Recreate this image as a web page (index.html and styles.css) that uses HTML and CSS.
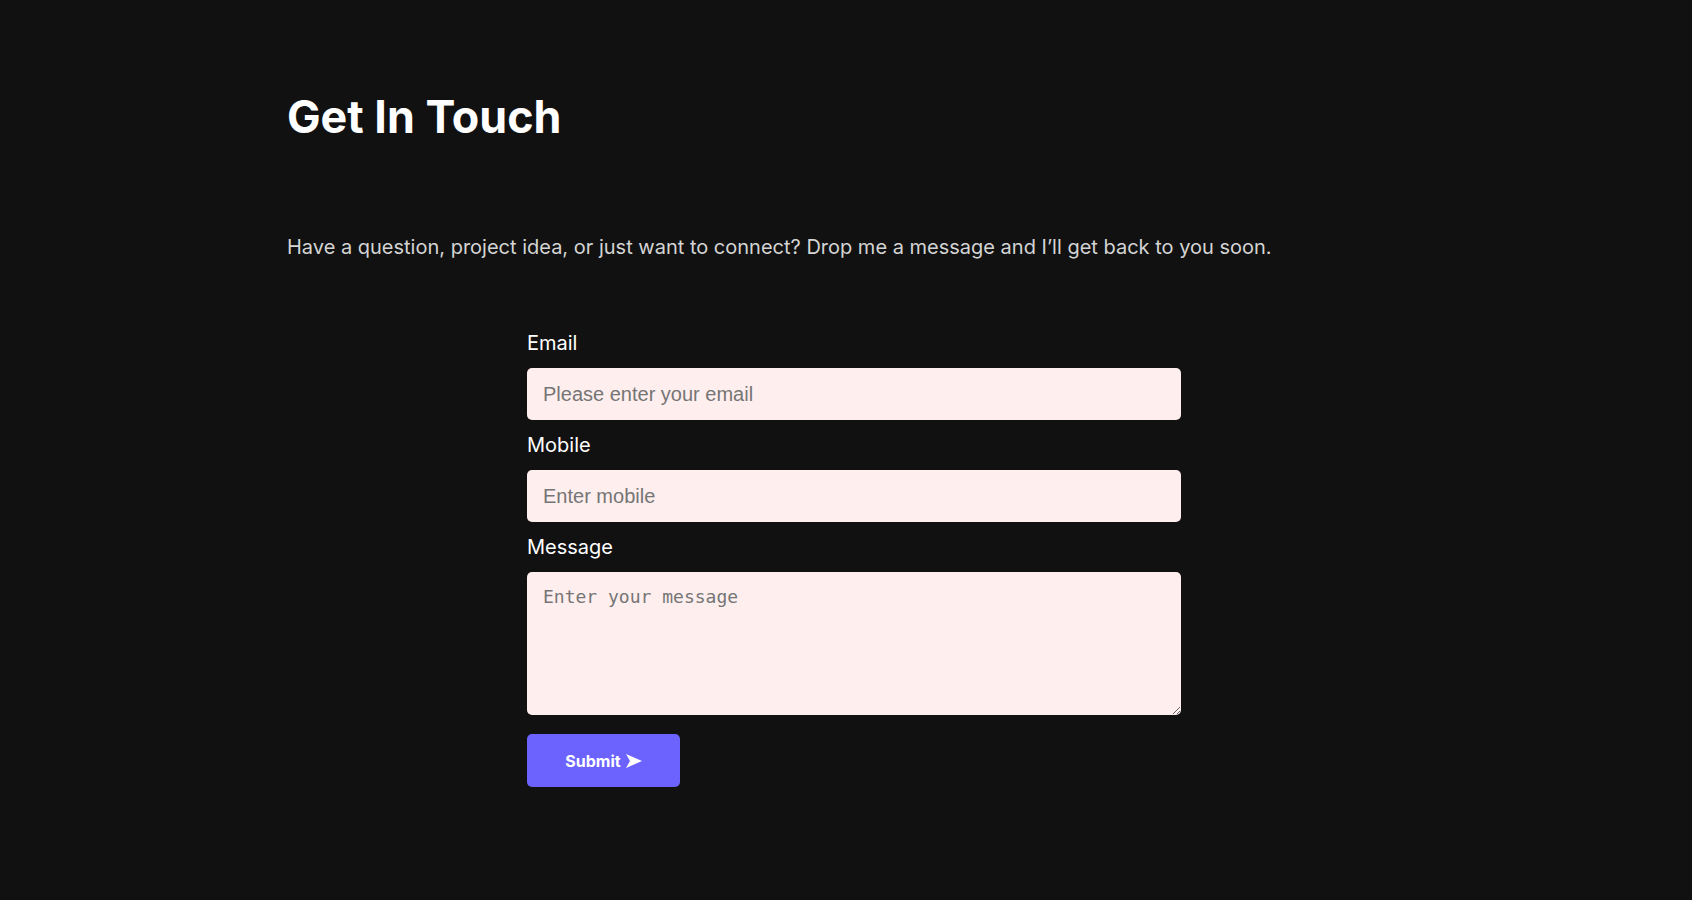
FILE: index.html
```html
<!DOCTYPE html>
<html lang="en">
<head>
<meta charset="utf-8">
<title>Get In Touch</title>
<link rel="stylesheet" href="styles.css">
</head>
<body>
<section class="contact">
  <h1 class="contact-title">Get In Touch</h1>
  <p class="contact-intro">Have a question, project idea, or just want to connect? Drop me a message and I’ll get back to you soon.</p>
  <form class="contact-form">
    <label class="field-label" for="email">Email</label>
    <input class="field-input" id="email" type="email" placeholder="Please enter your email">
    <label class="field-label" for="mobile">Mobile</label>
    <input class="field-input" id="mobile" type="text" placeholder="Enter mobile">
    <label class="field-label" for="message">Message</label>
    <textarea class="field-textarea" id="message" placeholder="Enter your message"></textarea>
    <button class="submit-btn" type="button"><span>Submit</span><svg class="submit-icon" viewBox="0 0 16 14" width="16" height="14" aria-hidden="true"><polygon points="0,0 16,7 0,14 4,7" fill="#ffffff"/></svg></button>
  </form>
</section>
</body>
</html>
```

FILE: styles.css
```css
html, body {
  margin: 0;
  padding: 0;
  background: #111111;
  height: 100%;
}

body {
  font-family: Inter, "Liberation Sans", sans-serif;
  color: #ffffff;
}

.contact {
  padding: 90px 287px 0 287px;
}

.contact-title {
  margin: 0;
  font-family: Inter, sans-serif;
  font-weight: 700;
  font-size: 44.8px;
  line-height: 54px;
  color: #ffffff;
}

.contact-intro {
  margin: 91px 0 0 0;
  font-family: Inter, sans-serif;
  font-size: 20px;
  line-height: 24px;
  color: #d4d4d4;
}

.contact-form {
  display: flex;
  flex-direction: column;
  align-items: flex-start;
  width: 654px;
  margin: 73px 0 0 240px;
}

.field-label {
  font-family: Inter, sans-serif;
  font-size: 20px;
  line-height: 23px;
  color: #ffffff;
  margin: 14px 0 13px 0;
}

.field-label:first-child {
  margin-top: 0;
}

.field-input,
.field-textarea {
  box-sizing: border-box;
  width: 100%;
  border: none;
  outline: none;
  border-radius: 5px;
  background: #ffeeee;
  color: #222;
  padding: 0 16px;
}

.field-input {
  height: 52px;
  font-family: "Liberation Sans", Arial, sans-serif;
  font-size: 20px;
}

.field-textarea {
  height: 143px;
  padding: 14px 16px;
  font-family: "DejaVu Sans Mono", monospace;
  font-size: 18px;
  line-height: 21px;
  resize: vertical;
}

.field-input::placeholder,
.field-textarea::placeholder {
  color: #757575;
}

.submit-btn {
  margin-top: 19px;
  width: 153px;
  height: 53px;
  border: none;
  border-radius: 5px;
  background: #6c63ff;
  color: #ffffff;
  font-family: Inter, sans-serif;
  font-weight: 700;
  font-size: 16px;
  cursor: pointer;
  display: flex;
  align-items: center;
  justify-content: center;
  gap: 5px;
  padding: 0;
}

.submit-icon {
  display: block;
}
```
